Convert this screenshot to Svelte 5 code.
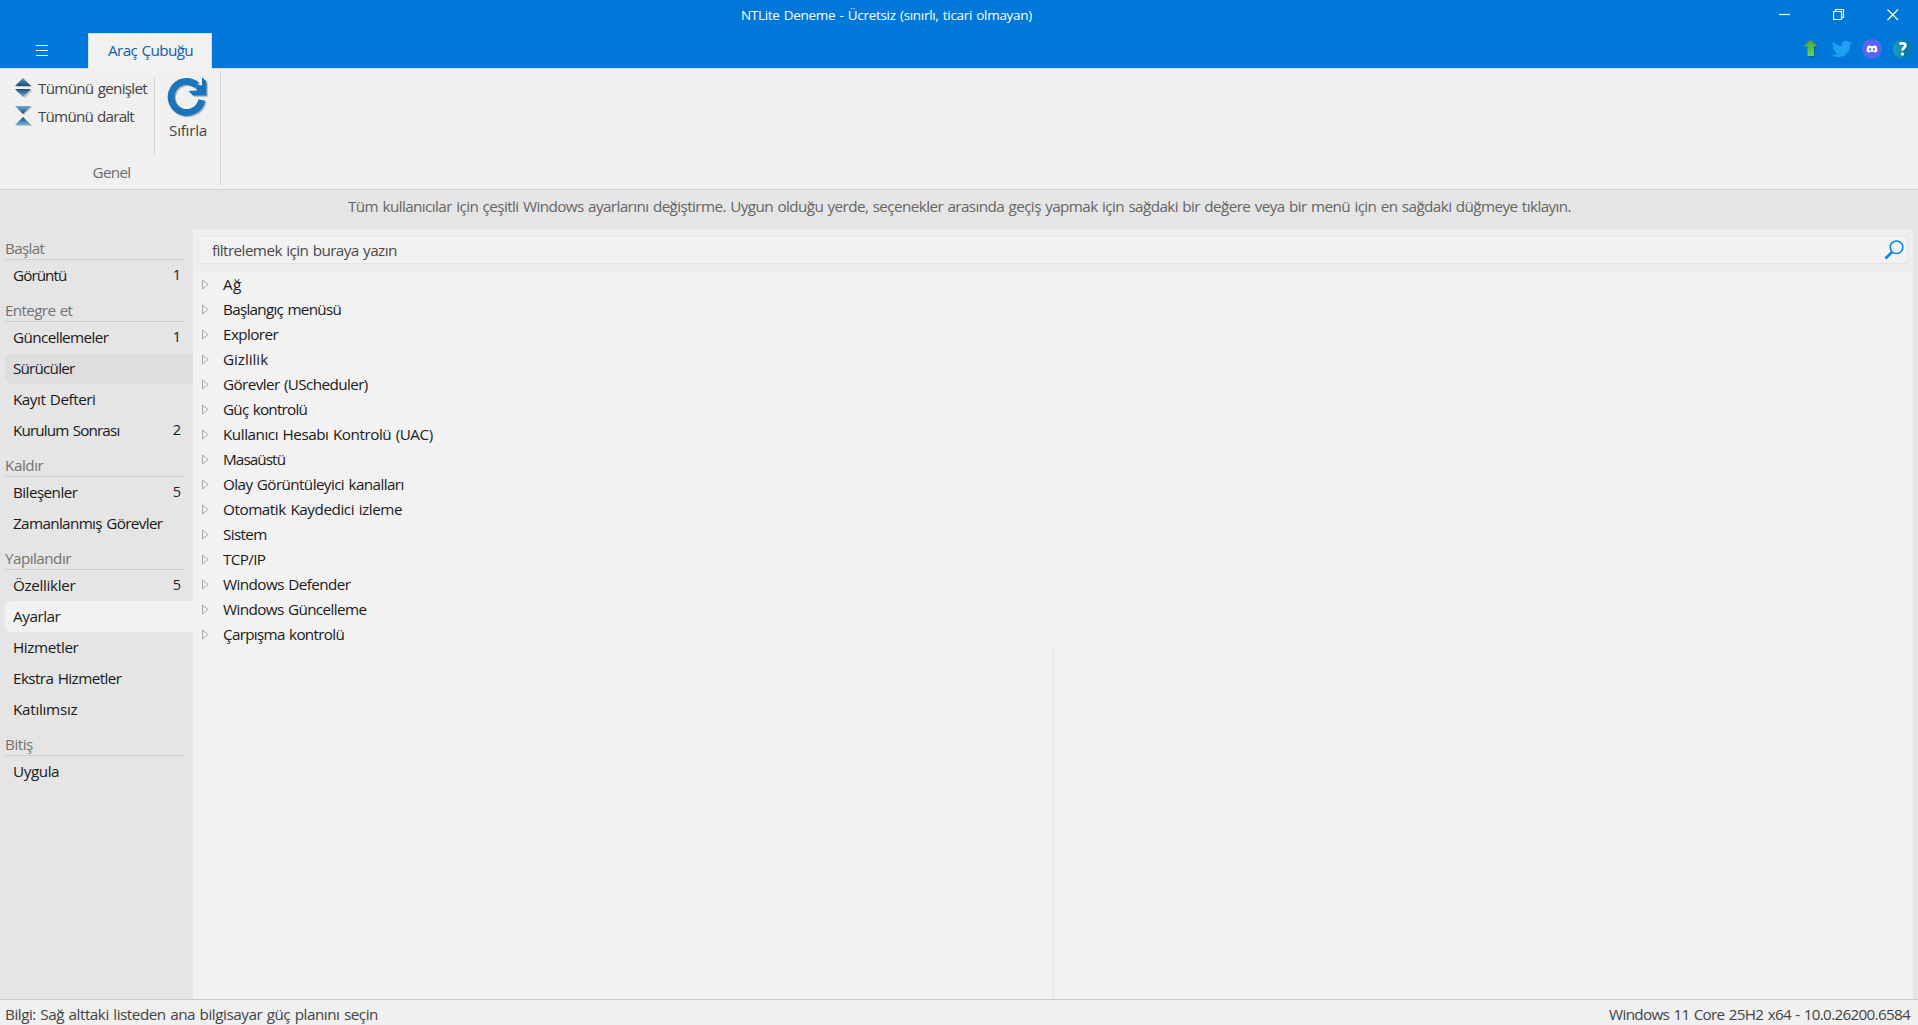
<script>
    let filter = '';
    let selected = 'Ayarlar';

    // w is the width of the label in pixels
    const groups = [
        { name: 'Başlat', w: 39, items: [{ name: 'Görüntü', w: 53, count: 1 }] },
        {
            name: 'Entegre et', w: 67, items: [
                { name: 'Güncellemeler', w: 95, count: 1 },
                { name: 'Sürücüler', w: 61, hover: true },
                { name: 'Kayıt Defteri', w: 82 },
                { name: 'Kurulum Sonrası', w: 106, count: 2 }
            ]
        },
        {
            name: 'Kaldır', w: 38, items: [
                { name: 'Bileşenler', w: 64, count: 5 },
                { name: 'Zamanlanmış Görevler', w: 149 }
            ]
        },
        {
            name: 'Yapılandır', w: 65.5, items: [
                { name: 'Özellikler', w: 62, count: 5 },
                { name: 'Ayarlar', w: 47 },
                { name: 'Hizmetler', w: 65 },
                { name: 'Ekstra Hizmetler', w: 108 },
                { name: 'Katılımsız', w: 64 }
            ]
        },
        { name: 'Bitiş', w: 27.5, items: [{ name: 'Uygula', w: 45.7 }] }
    ];

    const settings = [
        ['Ağ', 18.3],
        ['Başlangıç menüsü', 117.7],
        ['Explorer', 54.7],
        ['Gizlilik', 44.7],
        ['Görevler (UScheduler)', 144.3],
        ['Güç kontrolü', 83.7],
        ['Kullanıcı Hesabı Kontrolü (UAC)', 209.3],
        ['Masaüstü', 61.7],
        ['Olay Görüntüleyici kanalları', 180.3],
        ['Otomatik Kaydedici izleme', 178.7],
        ['Sistem', 43.3],
        ['TCP/IP', 42],
        ['Windows Defender', 127],
        ['Windows Güncelleme', 143],
        ['Çarpışma kontrolü', 120.7]
    ];

    // spread the letters so that the label takes the given width
    function fit(node, width) {
        const natural = node.getBoundingClientRect().width;
        node.style.letterSpacing = (width + 0.4 - natural) / node.textContent.length + 'px';
    }
</script>

<div class="window">
    <header>
        <div class="titlebar">
            <span class="label" use:fit={290.5}>NTLite Deneme - Ücretsiz (sınırlı, ticari olmayan)</span>
            <div class="caption">
                <svg width="12" height="12" viewBox="0 0 12 12"><path d="M0 5.5h11" /></svg>
                <svg width="12" height="12" viewBox="0 0 12 12"><path d="M.5 2.5h8v8h-8zM2.5 2.5v-2h8v8h-2" /></svg>
                <svg width="12" height="12" viewBox="0 0 12 12"><path d="M.5.5l10.500 10.500M11 .5L.5 11" /></svg>
            </div>
        </div>
        <div class="tabs">
            <button class="menu" aria-label="Menü">
                <svg width="12" height="12" viewBox="0 0 12 12"><path d="M0 .5h12M0 5.500h12M0 10.500h12" stroke="#fff" /></svg>
            </button>
            <button class="tab"><span class="label" use:fit={84.7}>Araç Çubuğu</span></button>
            <div class="links">
                <svg width="16" height="20" viewBox="0 0 16 20">
                    <defs><linearGradient id="green" x2="0" y2="1"><stop stop-color="#4f9a45" /><stop offset="1" stop-color="#5fd653" /></linearGradient></defs>
                    <path d="M8.500 2.500l7 7h-3.500v9h-6" fill="#075795" opacity=".7" />
                    <path d="M7.500.5L14.500 7.500H11V17H4.500V7.500H.5z" fill="url(#green)" />
                </svg>
                <svg width="20" height="20" viewBox="0 0 24 24">
                    <path fill="#1da1f2" d="M23.950 4.570a10 10 0 0 1-2.820.770 4.960 4.960 0 0 0 2.160-2.720c-.950.550-2 .950-3.130 1.180a4.920 4.920 0 0 0-8.380 4.480A13.900 13.900 0 0 1 1.640 3.160a4.920 4.920 0 0 0 1.520 6.570 4.900 4.900 0 0 1-2.230-.610v.060a4.920 4.920 0 0 0 3.950 4.830 5 5 0 0 1-2.210.080 4.940 4.940 0 0 0 4.600 3.420A9.870 9.870 0 0 1 0 19.540a14 14 0 0 0 7.550 2.210c9.050 0 14-7.500 14-13.980l-.020-.640a9.900 9.900 0 0 0 2.420-2.560z" />
                </svg>
                <svg width="20" height="20" viewBox="0 0 20 20">
                    <circle cx="10" cy="10" r="10" fill="#5865f2" />
                    <path fill="#fff" d="M7.800 6.200l.5.700h3.400l.5-.7 2 .8c1 1.700 1.300 3.700 1 5.600-.7.600-1.600.900-2.400 1.200l-.7-1.100H7.900l-.7 1.100c-.8-.3-1.700-.6-2.400-1.200-.3-1.900 0-3.900 1-5.600z" />
                    <ellipse cx="8.200" cy="10.300" rx="1" ry="1.200" fill="#5865f2" />
                    <ellipse cx="11.800" cy="10.300" rx="1" ry="1.200" fill="#5865f2" />
                </svg>
                <svg width="20" height="20" viewBox="0 0 20 20">
                    <defs><linearGradient id="teal"><stop stop-color="#2399bd" /><stop offset=".5" stop-color="#1389b5" /><stop offset=".5" stop-color="#0878ae" /><stop offset="1" stop-color="#0876b4" /></linearGradient></defs>
                    <circle cx="10" cy="10" r="10" fill="url(#teal)" />
                    <path d="M6.500 5.200c3.200-1.900 6.200-.7 5.800 1.500-.3 2-2.700 2.200-2.800 4.800" fill="none" stroke="#fff" stroke-width="2.700" />
                    <circle cx="9.500" cy="15" r="1.700" fill="#fff" />
                </svg>
            </div>
        </div>
    </header>

    <div class="ribbon">
        <div class="group">
            <div class="tools">
                <div class="small">
                    <button>
                        <svg width="18" height="20" viewBox="0 0 18 20">
                            <defs>
                                <linearGradient id="up" x2="0" y2="1"><stop stop-color="#619bc4" /><stop offset="1" stop-color="#174d7c" /></linearGradient>
                                <linearGradient id="down" x2="0" y2="1"><stop stop-color="#174d7c" /><stop offset="1" stop-color="#75b0d8" /></linearGradient>
                            </defs>
                            <path d="M9 1.500L17.500 9H2zM2 12h16l-8 8z" fill="#c4c4c4" />
                            <path d="M8 0l8 8H0z" fill="url(#up)" />
                            <path d="M0 11h16l-8 8z" fill="url(#down)" />
                        </svg>
                        <span class="label" use:fit={108.5}>Tümünü genişlet</span>
                    </button>
                    <button>
                        <svg width="18" height="20" viewBox="0 0 18 20">
                            <defs>
                                <linearGradient id="top" x2="0" y2="1"><stop stop-color="#70a9d6" /><stop offset="1" stop-color="#174d7c" /></linearGradient>
                                <linearGradient id="bottom" x2="0" y2="1"><stop stop-color="#174d7c" /><stop offset="1" stop-color="#75b0d8" /></linearGradient>
                            </defs>
                            <path d="M1 1h16.500L9 9zM9 12l8.500 8H1z" fill="#c4c4c4" />
                            <path d="M0 0h16L8 8z" fill="url(#top)" />
                            <path d="M8 11l8 8H0z" fill="url(#bottom)" />
                        </svg>
                        <span class="label" use:fit={95.5}>Tümünü daralt</span>
                    </button>
                </div>
                <button class="large">
                    <svg width="42" height="42" viewBox="0 0 42 42">
                        <g fill="#a9b0b6" stroke="#a9b0b6" transform="translate(1.200 1.200)">
                            <path d="M34.900 23A15.500 15.500 0 1 1 29.700 8.100" fill="none" stroke-width="7" />
                            <path d="M35 .3L39.500 4.500V18.500H26L21.500 14L30 13.500L27 7L35 8.500z" stroke="none" />
                        </g>
                        <path d="M34.900 23A15.500 15.500 0 1 1 29.700 8.100" fill="none" stroke="#1b75bc" stroke-width="7" />
                        <path d="M35 .3L39.500 4.500V18.500H26L21.500 14L30 13.500L27 7L35 8.500z" fill="#1b75bc" />
                    </svg>
                    <span class="label" use:fit={37.5}>Sıfırla</span>
                </button>
            </div>
            <div class="group-name"><span class="label" use:fit={37.5}>Genel</span></div>
        </div>
    </div>

    <div class="hint">
        <span class="label" use:fit={1222.6}>Tüm kullanıcılar için çeşitli Windows ayarlarını değiştirme. Uygun olduğu yerde, seçenekler arasında geçiş yapmak için sağdaki bir değere veya bir menü için en sağdaki düğmeye tıklayın.</span>
    </div>

    <main>
        <nav>
            {#each groups as group}
                <div class="heading"><span class="label" use:fit={group.w}>{group.name}</span></div>
                {#each group.items as item}
                    <button
                        class="item"
                        class:hover={item.hover}
                        class:selected={item.name == selected}
                        on:click={() => selected = item.name}
                    >
                        <span class="label" use:fit={item.w}>{item.name}</span>
                        {#if item.count}<span class="count">{item.count}</span>{/if}
                    </button>
                {/each}
            {/each}
        </nav>

        <section>
            <div class="search">
                <div class="box">
                    {#if filter == ''}
                        <span class="label" use:fit={184.3}>filtrelemek için buraya yazın</span>
                    {/if}
                    <svg width="20" height="20" viewBox="0 0 20 20" fill="none" stroke="#0a84e8">
                        <circle cx="12.500" cy="7.300" r="6.300" stroke-width="1.500" />
                        <path d="M8 12l-6.500 6.500" stroke-width="2.600" />
                    </svg>
                </div>
            </div>
            <div class="tree">
                {#each settings as [name, w]}
                    <div class="row">
                        <svg width="7" height="11" viewBox="0 0 7 11"><path d="M.5 1v9l5.500-4.500z" fill="none" stroke="#a6a6a6" /></svg>
                        <span class="label" use:fit={w}>{name}</span>
                    </div>
                {/each}
            </div>
            <div class="columns"><div></div></div>
        </section>
    </main>

    <footer>
        <span class="label" use:fit={372.5}>Bilgi: Sağ alttaki listeden ana bilgisayar güç planını seçin</span>
        <span class="label" use:fit={300.5}>Windows 11 Core 25H2 x64 - 10.0.26200.6584</span>
    </footer>
</div>

<style>
:global(body) {
    overflow: hidden;
}

.window {
    display: flex;
    flex-direction: column;
    height: 1025px;
    box-sizing: border-box;
    background: #e5e5e5;
    color: #1a1a1a;
    font-family: "Open Sans", "Noto Sans", sans-serif;
    font-size: 15.25px;
    line-height: 20px;
    word-spacing: 1px;
}

svg {
    display: block;
    flex: none;
}

button {
    padding: 0;
    border: 0;
    background: none;
    color: inherit;
    font: inherit;
    word-spacing: inherit;
    text-align: left;
}

.label {
    display: inline-block;
    white-space: nowrap;
}

header {
    height: 68px;
    background: #0078d9;
    color: white;
}

.titlebar {
    display: grid;
    grid-template-columns: 741px 1fr auto;
    height: 33px;
    font-size: 13.5px;
}

.titlebar .label {
    grid-column: 2;
    justify-self: start;
    padding-top: 5px;
}

.caption {
    display: flex;
    gap: 42px;
    padding: 9px 19px 0 0;
}

.caption path {
    fill: none;
    stroke: white;
    stroke-width: 1.2;
}

.tabs {
    display: flex;
    height: 36px;
}

.menu {
    display: flex;
    align-items: center;
    width: 88px;
    padding-left: 36px;
    box-sizing: border-box;
}

.tab {
    position: relative;
    width: 124px;
    height: 36px;
    padding: 0 0 4px 19px;
    box-sizing: border-box;
    border: 1px solid #d6dde3;
    border-bottom: 0;
    background: #f1f1f1;
    color: #1261a8;
}

.links {
    display: flex;
    gap: 11px;
    margin-left: auto;
    padding: 6px 5px 0 0;
}

.links svg:nth-child(1) {
    margin-right: 2px;
}

.links svg:nth-child(2) {
    margin-right: -1px;
}

.ribbon {
    height: 122px;
    box-sizing: border-box;
    padding-top: 2px;
    border-top: 1px solid #dcdcdc;
    border-bottom: 1px solid #d2d2d2;
    background: #f0f0f0;
    color: #444;
}

.group {
    display: flex;
    flex-direction: column;
    width: 221px;
    height: 114px;
    box-sizing: border-box;
    border-right: 1px solid #d4d4d4;
}

.tools {
    display: flex;
    height: 91px;
}

.small {
    display: flex;
    flex: none;
    flex-direction: column;
    gap: 8px;
    width: 155px;
    height: 77px;
    margin-top: 7px;
    box-sizing: border-box;
    border-right: 1px solid #d4d4d4;
}

.small button {
    display: flex;
    gap: 5px;
    height: 20px;
    padding-left: 15px;
}

.large {
    display: flex;
    flex-direction: column;
    align-items: center;
    width: 65px;
    padding: 6px 0 0 1px;
    box-sizing: border-box;
}

.large .label {
    margin-top: 1px;
}

.group-name {
    padding-left: 92.5px;
    color: #6d6d6d;
}

.hint {
    height: 39px;
    padding: 6px 0 0 348px;
    box-sizing: border-box;
    color: #666;
}

main {
    display: flex;
    height: 770px;
}

nav {
    width: 193px;
    padding-left: 5px;
    box-sizing: border-box;
}

.heading {
    width: 179px;
    height: 31px;
    padding-top: 9px;
    box-sizing: border-box;
    border-bottom: 1px solid #cfcfcf;
    color: #737373;
}

.item {
    display: flex;
    align-items: center;
    justify-content: space-between;
    width: 188px;
    height: 31px;
    padding: 0 12px 1px 8px;
    box-sizing: border-box;
    border-radius: 7px 0 0 7px;
}

.item.hover {
    background: #dedede;
}

.item.selected {
    background: #f2f2f2;
}

.count {
    font-size: 14.5px;
}

section {
    display: flex;
    flex-direction: column;
    width: 1720px;
    background: #f2f2f2;
}

.search {
    height: 43px;
    padding: 7px 5px 0;
    box-sizing: border-box;
    background: #eee;
}

.box {
    display: flex;
    align-items: center;
    justify-content: space-between;
    height: 28px;
    padding: 0 3px 0 13px;
    box-sizing: border-box;
    border: 1px solid #e4e4e4;
    background: #f2f2f2;
    color: #4a4a4a;
}

.row {
    display: flex;
    align-items: center;
    gap: 14px;
    height: 25px;
    padding-left: 9px;
}

.row .label {
    padding-bottom: 1px;
}

.columns {
    flex: 1;
    padding-left: 860px;
}

.columns div {
    width: 1px;
    height: 100%;
    background: #e4e4e4;
}

footer {
    display: flex;
    justify-content: space-between;
    height: 26px;
    padding: 4px 8px 0 5px;
    box-sizing: border-box;
    border-top: 1px solid #c9c9c9;
    background: #f0f0f0;
    color: #444;
}
</style>
